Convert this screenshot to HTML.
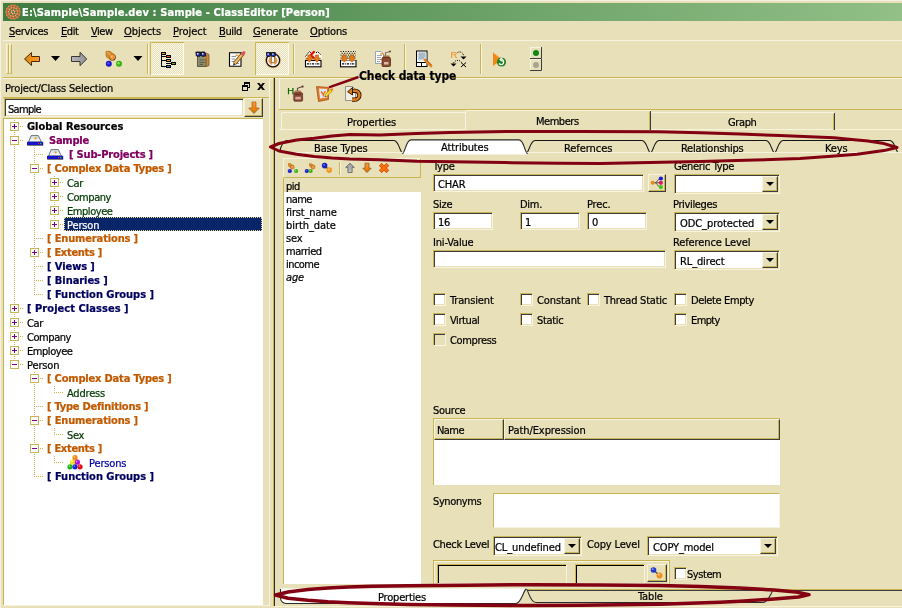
<!DOCTYPE html>
<html><head><meta charset="utf-8"><title>ClassEditor</title>
<style>
:root{--bg:#e8e0b8;--hi:#f7f3de;--sh:#c9b653;--dk:#3c3c40;}
*{box-sizing:border-box;margin:0;padding:0}
html,body{width:902px;height:608px;overflow:hidden;background:var(--bg)}
body{position:relative;font-family:"DejaVu Sans Condensed","Liberation Sans",sans-serif;font-size:11px;color:#000;line-height:13px}
.a{position:absolute}
.t{position:absolute;white-space:pre;line-height:13px;height:13px;-webkit-text-stroke:0.22px currentColor}
.b{font-weight:bold}
.sunk{position:absolute;border:1px solid;border-color:var(--sh) var(--hi) var(--hi) var(--sh);box-shadow:inset 1px 1px 0 var(--dk),inset -1px -1px 0 var(--bg);background:#fff}
.rais{position:absolute;border:1px solid;border-color:var(--hi) var(--dk) var(--dk) var(--hi);box-shadow:inset -1px -1px 0 var(--sh);background:var(--bg)}
.hl{position:absolute;height:1px}
.vl{position:absolute;width:1px}
.vd{position:absolute;width:1px;background:repeating-linear-gradient(180deg,var(--sh) 0 1px,transparent 1px 2px)}
.hd{position:absolute;height:1px;background:repeating-linear-gradient(90deg,var(--sh) 0 1px,transparent 1px 2px)}
.bx{position:absolute;width:9px;height:9px;border:1px solid var(--sh);background:#fff}
.bx b{position:absolute;left:1px;top:3px;width:5px;height:1px;background:#800080}
.bx i{position:absolute;left:3px;top:1px;width:1px;height:5px;background:#800080}
.dd{position:absolute;right:1px;top:1px;width:16px;height:16px;border:1px solid;border-color:var(--hi) var(--dk) var(--dk) var(--hi);box-shadow:inset -1px -1px 0 var(--sh);background:var(--bg)}
.dd:after{content:"";position:absolute;left:4px;top:5px;border:4px solid transparent;border-top:4px solid #000;border-bottom:none;width:0;height:0;margin-left:-1px}
#wrap{position:absolute;left:0;top:0;width:902px;height:608px;will-change:transform}
</style></head><body><div id="wrap">
<!-- window frame -->
<div class="hl" style="left:0;top:0;width:902px;background:#f4f1e4"></div>
<div class="vl" style="left:0;top:0;height:608px;background:#f4f1e4"></div>
<!-- title bar -->
<div class="a" id="title" style="left:3px;top:3px;width:899px;height:18px;background:linear-gradient(90deg,#3e7d42 0%,#92c087 100%)"></div>
<svg class="a" style="left:5px;top:4px" width="16" height="16" viewBox="0 0 16 16"><circle cx="8" cy="8" r="7.500" fill="#d4703a"/><circle cx="8.00" cy="8.00" r="1.00" fill="#3f7f43"/><circle cx="10.95" cy="8.52" r="0.95" fill="#3f7f43"/><circle cx="9.03" cy="10.82" r="0.95" fill="#3f7f43"/><circle cx="6.07" cy="10.30" r="0.95" fill="#3f7f43"/><circle cx="5.05" cy="7.48" r="0.95" fill="#3f7f43"/><circle cx="6.97" cy="5.18" r="0.95" fill="#3f7f43"/><circle cx="9.93" cy="5.70" r="0.95" fill="#3f7f43"/><circle cx="13.58" cy="8.49" r="0.70" fill="#3f7f43"/><circle cx="12.43" cy="11.43" r="0.70" fill="#3f7f43"/><circle cx="9.87" cy="13.28" r="0.70" fill="#3f7f43"/><circle cx="6.72" cy="13.45" r="0.70" fill="#3f7f43"/><circle cx="3.98" cy="11.90" r="0.70" fill="#3f7f43"/><circle cx="2.51" cy="9.10" r="0.70" fill="#3f7f43"/><circle cx="2.78" cy="5.96" r="0.70" fill="#3f7f43"/><circle cx="4.72" cy="3.46" r="0.70" fill="#3f7f43"/><circle cx="7.69" cy="2.41" r="0.70" fill="#3f7f43"/><circle cx="10.76" cy="3.13" r="0.70" fill="#3f7f43"/><circle cx="12.96" cy="5.39" r="0.70" fill="#3f7f43"/><circle cx="9.30" cy="9.09" r="0.55" fill="#f6d2b4"/><circle cx="7.70" cy="9.67" r="0.55" fill="#f6d2b4"/><circle cx="6.40" cy="8.58" r="0.55" fill="#f6d2b4"/><circle cx="6.70" cy="6.91" r="0.55" fill="#f6d2b4"/><circle cx="8.30" cy="6.33" r="0.55" fill="#f6d2b4"/><circle cx="9.60" cy="7.42" r="0.55" fill="#f6d2b4"/><circle cx="12.11" cy="9.58" r="0.55" fill="#f2c4a0"/><circle cx="10.60" cy="11.55" r="0.55" fill="#f2c4a0"/><circle cx="8.27" cy="12.39" r="0.55" fill="#f2c4a0"/><circle cx="5.85" cy="11.84" r="0.55" fill="#f2c4a0"/><circle cx="4.12" cy="10.07" r="0.55" fill="#f2c4a0"/><circle cx="3.61" cy="7.64" r="0.55" fill="#f2c4a0"/><circle cx="4.50" cy="5.33" r="0.55" fill="#f2c4a0"/><circle cx="6.50" cy="3.86" r="0.55" fill="#f2c4a0"/><circle cx="8.98" cy="3.71" r="0.55" fill="#f2c4a0"/><circle cx="11.14" cy="4.92" r="0.55" fill="#f2c4a0"/><circle cx="12.31" cy="7.11" r="0.55" fill="#f2c4a0"/><circle cx="15.20" cy="8.00" r="0.6" fill="#e89868"/><circle cx="14.49" cy="11.12" r="0.6" fill="#e89868"/><circle cx="12.49" cy="13.63" r="0.6" fill="#e89868"/><circle cx="9.60" cy="15.02" r="0.6" fill="#e89868"/><circle cx="6.40" cy="15.02" r="0.6" fill="#e89868"/><circle cx="3.51" cy="13.63" r="0.6" fill="#e89868"/><circle cx="1.51" cy="11.12" r="0.6" fill="#e89868"/><circle cx="0.80" cy="8.00" r="0.6" fill="#e89868"/><circle cx="1.51" cy="4.88" r="0.6" fill="#e89868"/><circle cx="3.51" cy="2.37" r="0.6" fill="#e89868"/><circle cx="6.40" cy="0.98" r="0.6" fill="#e89868"/><circle cx="9.60" cy="0.98" r="0.6" fill="#e89868"/><circle cx="12.49" cy="2.37" r="0.6" fill="#e89868"/><circle cx="14.49" cy="4.88" r="0.6" fill="#e89868"/></svg>
<div class="t b" style="left:22px;top:6px;color:#fff;letter-spacing:0.12px">E:\Sample\Sample.dev : Sample - ClassEditor [Person]</div>
<!-- menu -->
<div class="t" id="m1" style="letter-spacing:-0.34px;;;left:9px;top:25px"><u>S</u>ervices</div>
<div class="t" id="m2" style="letter-spacing:-0.42px;;;left:61px;top:25px"><u>E</u>dit</div>
<div class="t" id="m3" style="letter-spacing:-0.49px;;;left:91px;top:25px"><u>V</u>iew</div>
<div class="t" id="m4" style="letter-spacing:-0.06px;;;left:124px;top:25px"><u>O</u>bjects</div>
<div class="t" id="m5" style="letter-spacing:-0.05px;;;left:173px;top:25px"><u>P</u>roject</div>
<div class="t" id="m6" style="letter-spacing:-0.37px;;;left:219px;top:25px"><u>B</u>uild</div>
<div class="t" id="m7" style="letter-spacing:-0.15px;;;left:253px;top:25px"><u>G</u>enerate</div>
<div class="t" id="m8" style="letter-spacing:-0.17px;;;left:310px;top:25px"><u>O</u>ptions</div>
<div class="hl" style="left:3px;top:40px;width:899px;background:var(--hi)"></div>
<!--TOOLBAR-->
<!-- toolbar -->
<div class="hl" style="left:3px;top:77px;width:899px;background:var(--sh)"></div>
<div class="hl" style="left:3px;top:78px;width:899px;background:var(--hi)"></div>
<div class="a" style="left:6px;top:44px;width:3px;height:30px;border-left:1px solid var(--hi);border-top:1px solid var(--hi);border-right:1px solid var(--sh);border-bottom:1px solid var(--sh)"></div>
<div class="a" style="left:9px;top:44px;width:3px;height:30px;border-left:1px solid var(--hi);border-top:1px solid var(--hi);border-right:1px solid var(--sh);border-bottom:1px solid var(--sh)"></div>
<svg class="a" style="left:0;top:41px" width="902" height="36" viewBox="0 41 902 36">
<defs>
<linearGradient id="gO" x1="0" x2="1" y1="0" y2="0"><stop offset="0" stop-color="#c88a10"/><stop offset="0.5" stop-color="#f89018"/><stop offset="1" stop-color="#ff9a38"/></linearGradient>
<linearGradient id="gG" x1="0" x2="1" y1="0" y2="0"><stop offset="0" stop-color="#b8b8b8"/><stop offset="1" stop-color="#909090"/></linearGradient>
<pattern id="dith" width="2" height="2" patternUnits="userSpaceOnUse"><rect width="2" height="2" fill="#e8e0b8"/><rect width="1" height="1" fill="#f8f5e6"/><rect x="1" y="1" width="1" height="1" fill="#f8f5e6"/></pattern>
</defs>
<!-- back arrow -->
<path d="M24.5 59 L31.5 52.5 L31.5 56.5 L39.5 56.5 L39.5 61.5 L31.5 61.5 L31.5 65.5 Z" fill="url(#gO)" stroke="#4a2a08" stroke-width="1" stroke-linejoin="miter"/>
<path d="M51 56 L60 56 L55.5 61 Z" fill="#000"/>
<!-- forward arrow -->
<path d="M86.800 59 L80 52.300 L80 56.500 L71.500 56.500 L71.500 61.500 L80 61.500 L80 65.700 Z" fill="url(#gG)" stroke="#383838" stroke-width="1"/>
<!-- balls icon -->
<path d="M106 51.300 L110 51.300 L115.200 55.300 L110.800 60.200 L106 56.500 Z" fill="#d48a30" stroke="#a86a18" stroke-width="0.600"/>
<path d="M107 52.300 L112 56" stroke="#e8a850" stroke-width="1.200"/>
<circle cx="112.700" cy="57.400" r="3.100" fill="#5a3008"/>
<circle cx="112.400" cy="57.100" r="2.800" fill="#f09030"/><circle cx="111.800" cy="56.500" r="0.900" fill="#fbd0a0"/>
<circle cx="108.800" cy="63.800" r="3" fill="#1818c8"/><circle cx="108.300" cy="63.300" r="1.200" fill="#5050f0"/>
<circle cx="119" cy="63.800" r="3" fill="#38b010"/><circle cx="118.500" cy="63.300" r="1.200" fill="#80e860"/>
<path d="M133.5 56 L142.5 56 L138 61 Z" fill="#000"/>
<!-- separators -->
<rect x="147" y="44" width="1" height="30" fill="#c9b653"/><rect x="148" y="44" width="1" height="30" fill="#f7f3de"/>
<rect x="293" y="44" width="1" height="30" fill="#c9b653"/><rect x="294" y="44" width="1" height="30" fill="#f7f3de"/>
<rect x="404" y="44" width="1" height="30" fill="#c9b653"/><rect x="405" y="44" width="1" height="30" fill="#f7f3de"/>
<rect x="480" y="44" width="1" height="30" fill="#c9b653"/><rect x="481" y="44" width="1" height="30" fill="#f7f3de"/>
<!-- toggled buttons -->
<rect x="150" y="42" width="34" height="33" fill="url(#dith)"/>
<path d="M150.5 75 V42.5 H184" fill="none" stroke="#c9b653"/><path d="M151 74.500 H183.500 V43" fill="none" stroke="#fffbe6"/>
<rect x="255" y="42" width="34" height="33" fill="url(#dith)"/>
<path d="M255.5 75 V42.5 H289" fill="none" stroke="#c9b653"/><path d="M256 74.500 H288.500 V43" fill="none" stroke="#fffbe6"/>
<!-- tree icon -->
<g shape-rendering="crispEdges">
<rect x="161" y="52" width="5" height="3" fill="#000"/><rect x="162" y="53" width="3" height="1" fill="#f8960c"/>
<rect x="166" y="55" width="5" height="3" fill="#000"/><rect x="167" y="56" width="3" height="1" fill="#f8481c"/>
<rect x="166" y="59" width="5" height="3" fill="#000"/><rect x="167" y="60" width="3" height="1" fill="#d09c18"/>
<rect x="171" y="62" width="5" height="3" fill="#000"/><rect x="172" y="63" width="3" height="1" fill="#7ca80c"/>
<rect x="166" y="65" width="5" height="3" fill="#000"/><rect x="167" y="66" width="3" height="1" fill="#4878f8"/>
<rect x="161" y="55" width="1" height="12" fill="#000"/><rect x="161" y="56" width="5" height="1" fill="#000"/><rect x="161" y="60" width="5" height="1" fill="#000"/><rect x="161" y="66" width="5" height="1" fill="#000"/>
<rect x="166" y="63" width="5" height="1" fill="#000"/>
</g>
<!-- book with glasses -->
<path d="M198 54 L206 53 L209 54.500 V65.500 L206.500 66.500 H198 Z" fill="#d08838" stroke="#70481c" stroke-width="0.700"/>
<rect x="197.500" y="55.500" width="8.500" height="10.800" fill="#8e8e72" stroke="#50503c" stroke-width="0.800"/>
<path d="M199.500 60 H204.500 M199.500 62.500 H204.500 M199.500 64.500 H203" stroke="#5c5c48" stroke-width="1"/>
<rect x="204" y="57" width="2" height="1.200" fill="#f09020"/>
<path d="M195.500 52.500 H205" stroke="#101010" stroke-width="1.600"/>
<rect x="196.200" y="52.300" width="4.200" height="4" rx="1.200" fill="#1c2cb0" stroke="#101010" stroke-width="0.900"/>
<rect x="201.200" y="52.300" width="4.200" height="4" rx="1.200" fill="#1c2cb0" stroke="#101010" stroke-width="0.900"/>
<rect x="197" y="53.200" width="1.500" height="1.300" fill="#fff"/><rect x="202" y="53.200" width="1.500" height="1.300" fill="#fff"/>
<!-- note with pencil -->
<path d="M229.500 52.800 H241 V66.300 H229.500 Z" fill="#fff" stroke="#000" stroke-width="1.100"/>
<path d="M231.500 56.500 H236 M231.500 59 H235 M231.500 61.500 H234 M236 63.500 H239" stroke="#909090" stroke-width="1"/>
<rect x="235.500" y="54.600" width="3" height="1.200" fill="#f09020"/>
<path d="M234.500 63.500 L243.300 53.300" stroke="#6a4410" stroke-width="3.800"/>
<path d="M234.500 63.500 L243.300 53.300" stroke="#f0b860" stroke-width="2.400"/>
<path d="M242.600 54.200 L244 52.600" stroke="#e05068" stroke-width="3" stroke-linecap="round"/>
<path d="M232.800 65.800 L233.700 62.700 L235.800 64.500 Z" fill="#383838"/>
<!-- clock with glasses -->
<circle cx="273" cy="60.300" r="8" fill="#f2b070"/>
<circle cx="273" cy="60.300" r="6.600" fill="#fff" stroke="#101010" stroke-width="1.300"/>
<circle cx="273" cy="60.600" r="4.500" fill="#ea9848"/>
<rect x="271.700" y="55" width="2.600" height="7.300" fill="#fff" stroke="#303030" stroke-width="0.400"/><rect x="271.900" y="63.500" width="2.200" height="2.200" fill="#fff"/>
<path d="M266 53 H275.500" stroke="#101010" stroke-width="1.600"/>
<rect x="266.600" y="52.600" width="4" height="4" rx="1.200" fill="#1c2cb0" stroke="#101010" stroke-width="0.900"/>
<rect x="271.400" y="52.600" width="4" height="4" rx="1.200" fill="#1c2cb0" stroke="#101010" stroke-width="0.900"/>
<rect x="267.400" y="53.400" width="1.400" height="1.300" fill="#fff"/><rect x="272.200" y="53.400" width="1.400" height="1.300" fill="#fff"/>
<!-- icon 5 -->
<g>
<path d="M305.500 57 L309.500 51.500 L313 55 L309.500 59 H305.500 Z" fill="#fff"/>
<path d="M314 59 L313.500 55 L317.500 51.500 L321.500 55.500 V59 Z" fill="#fff"/>
<path d="M305.500 56.500 L309.500 51.500 L311 53 M316 53 L317.500 51.500 L321 55" fill="none" stroke="#000" stroke-width="1" stroke-dasharray="1.500 1"/>
<path d="M314.500 51.300 L310.800 55 L314.500 58.700" fill="none" stroke="#ee0808" stroke-width="2.200"/>
<rect x="305.500" y="60.500" width="15.500" height="6.300" fill="#fff" stroke="#000" stroke-width="1.100"/>
<path d="M307 63.800 H320" stroke="#000" stroke-width="1.200" stroke-dasharray="2.200 0.900 0.800 0.900"/>
<path d="M307.800 55 H311 V58 H313.200 L309.400 62.200 L305.600 58 H307.800 Z" fill="#e67c14" stroke="#9c4c08" stroke-width="0.500"/>
<path d="M315.300 55 H318.500 V58 H320.700 L316.900 62.200 L313.100 58 H315.300 Z" fill="#e67c14" stroke="#9c4c08" stroke-width="0.500"/>
</g>
<!-- icon 6 -->
<g>
<path d="M340.500 51.500 H356 M341.700 53.300 H356 M340.500 55.100 H356 M341.700 56.900 H356" stroke="#000" stroke-width="1" stroke-dasharray="1 1.500"/>
<rect x="340.500" y="60.500" width="15.500" height="6.300" fill="#fff" stroke="#000" stroke-width="1.100"/>
<rect x="341" y="58" width="14.500" height="2.500" fill="#fff"/>
<path d="M342 63.800 H355" stroke="#000" stroke-width="1.200" stroke-dasharray="2.200 0.900 0.800 0.900"/>
<path d="M342.700 55 H345.900 V58 H348.100 L344.300 62.200 L340.500 58 H342.700 Z" fill="#e67c14" stroke="#9c4c08" stroke-width="0.500"/>
<path d="M350.300 55 H353.500 V58 H355.700 L351.900 62.200 L348.100 58 H350.300 Z" fill="#e67c14" stroke="#9c4c08" stroke-width="0.500"/>
</g>
<!-- icon 7 doc + mill -->
<g>
<path d="M375.500 51.500 H381 L383.500 54 V63.500 H375.500 Z" fill="#fff" stroke="#9098a8" stroke-width="0.900"/>
<path d="M377 55.500 H382 M377 57.500 H381 M377 59.500 H382 M377 61.500 H380" stroke="#909090" stroke-width="0.800"/>
<rect x="380" y="53.300" width="3.500" height="1.200" fill="#f08818"/>
<path d="M385.500 56 V52.800 L390 51.500" fill="none" stroke="#707070" stroke-width="1.100"/><circle cx="390" cy="51.500" r="1" fill="#804030"/>
<rect x="383" y="55.500" width="6.500" height="2.500" fill="#a86848"/>
<rect x="382" y="57.500" width="8.500" height="9" rx="1" fill="#8a4a30" stroke="#5a2a18" stroke-width="0.800"/>
<rect x="384" y="62" width="4.500" height="2.500" fill="#e0b8a8"/>
</g>
<!-- icon 8 doc + magnifier -->
<g>
<rect x="416.500" y="51" width="10.500" height="15.500" fill="#fff" stroke="#000" stroke-width="1"/>
<rect x="417.500" y="52" width="9" height="8.500" rx="2" fill="#c8d4dc"/>
<path d="M419 54 H425 M419 56 H425 M419 58 H424" stroke="#8898a8" stroke-width="0.900"/>
<path d="M417 62.500 H427 M421.500 62.500 V66" stroke="#000" stroke-width="1"/>
<path d="M425 60 L431 66" stroke="#e88820" stroke-width="2.600" stroke-linecap="round"/><path d="M425.800 59.300 L431.800 65.300" stroke="#803808" stroke-width="0.700"/>
</g>
<!-- icon 9 R -->
<g>
<text x="450.500" y="58" font-family="Liberation Sans,sans-serif" font-size="9.500" fill="#f08818">R</text>
<path d="M457.500 52.500 C460 51 463.500 52.500 463.500 56" fill="none" stroke="#000" stroke-width="1" stroke-dasharray="1 1.200"/>
<path d="M460.500 56.500 H466.500 L463.500 59.500 Z" fill="#000"/>
<path d="M453.500 63 C455 60 459 59.500 461.500 62" fill="none" stroke="#000" stroke-width="1" stroke-dasharray="1 1.200"/>
<path d="M450.500 63.500 H456.500 L453.500 66.500 Z" fill="#000"/>
<path d="M461 62.500 L466 67 M466 62.500 L461 67" stroke="#000" stroke-width="1"/>
</g>
<!-- icon 10 play -->
<g>
<path d="M493 52.500 L502 59.500 L493 66 Z" fill="#f08818"/><path d="M493 52.500 L502 59.500" stroke="#f8b060" stroke-width="0.800"/>
<circle cx="501.500" cy="62" r="4.600" fill="#208020"/>
<path d="M499 63.500 A2.600 2.600 0 1 0 501.500 59.400" fill="none" stroke="#fff" stroke-width="1.300"/><path d="M502.500 57.500 L500 59.500 L502.500 61.500" fill="none" stroke="#fff" stroke-width="1.100"/>
</g>
<!-- icon 11 lights -->
<g>
<rect x="530.500" y="47.500" width="11" height="11" fill="#e8e0b8" stroke="#f7f3de" stroke-width="1"/><path d="M530 58.500 H541.500 V47" fill="none" stroke="#3c3c40" stroke-width="1"/>
<circle cx="536" cy="53" r="3" fill="#108810"/>
<rect x="530.500" y="59.500" width="11" height="11" fill="#e8e0b8" stroke="#f7f3de" stroke-width="1"/><path d="M530 70.500 H541.500 V59" fill="none" stroke="#3c3c40" stroke-width="1"/>
<circle cx="536" cy="65" r="3" fill="#a8a490"/>
</g>
</svg>
<!--/TOOLBAR-->
<!--DOCK-->
<!-- dock -->
<div class="t" style="letter-spacing:-0.17px;;;left:5px;top:82px">Project/Class Selection</div>
<svg class="a" style="left:241px;top:81px" width="26" height="11" viewBox="241 81 26 11" shape-rendering="crispEdges"><rect x="244.500" y="82.500" width="5" height="5" fill="none" stroke="#000"/><rect x="244" y="82" width="6" height="2" fill="#000"/><rect x="242.500" y="85.500" width="5" height="5" fill="#e8e0b8" stroke="#000"/><rect x="242" y="85" width="6" height="2" fill="#000"/><path shape-rendering="auto" d="M257 83 H259.400 L265 90 H262.600 Z" fill="#000"/><path shape-rendering="auto" d="M265 83 H262.600 L257 90 H259.400 Z" fill="#000"/></svg>
<div class="hl" style="left:3px;top:97px;width:266px;background:var(--sh)"></div>
<div class="vl" style="left:269px;top:79px;height:527px;background:var(--hi)"></div>
<div class="vl" style="left:273px;top:78px;height:528px;background:var(--sh)"></div>
<div class="vl" style="left:274px;top:78px;height:528px;background:#2a2a2a"></div>
<div class="sunk" style="left:4px;top:98px;width:240px;height:19px"></div>
<div class="t" style="letter-spacing:-0.69px;;;left:8px;top:103px">Sample</div>
<div class="rais" style="left:244px;top:98px;width:19px;height:19px"></div>
<svg class="a" style="left:248px;top:101px" width="12" height="14" viewBox="248 101 12 14"><defs><linearGradient id="gD" x1="0" x2="0" y1="0" y2="1"><stop offset="0" stop-color="#ff9840"/><stop offset="0.600" stop-color="#f08010"/><stop offset="1" stop-color="#b87808"/></linearGradient></defs><path d="M252 102 H256 V108 H259.300 L254 113.600 L248.700 108 H252 Z" fill="url(#gD)" stroke="#905010" stroke-width="0.600"/></svg>
<div class="hl" style="left:3px;top:118px;width:260px;background:var(--sh)"></div>
<div class="a" style="left:3px;top:119px;width:260px;height:486px;background:#fff;border-left:1px solid var(--sh)"></div>
<div class="hl" style="left:3px;top:605px;width:266px;background:var(--hi)"></div>
<!-- tree -->
<svg width="0" height="0" style="position:absolute"><defs>
<g id="drive"><path d="M4.200 0.400 H11.200 L14.400 6.900 H1.600 Z" fill="url(#gDr)" stroke="#56686c" stroke-width="0.900"/><circle cx="8.600" cy="3.300" r="1.100" fill="#f09020"/><rect x="0" y="6.800" width="16.200" height="3.400" fill="#1414c8"/><rect x="0.300" y="10.200" width="15.900" height="1.300" fill="url(#gSh)"/><rect x="11" y="7.900" width="1.300" height="1.300" fill="#f01818"/><rect x="13.100" y="7.900" width="1.300" height="1.300" fill="#28e028"/></g>
<linearGradient id="gDr" x1="0" x2="0" y1="0" y2="1"><stop offset="0" stop-color="#c4d6d8"/><stop offset="1" stop-color="#ffffff"/></linearGradient><linearGradient id="gSh" x1="0" x2="0" y1="0" y2="1"><stop offset="0" stop-color="#4a4a38"/><stop offset="1" stop-color="#4a4a38" stop-opacity="0"/></linearGradient>
<g id="balls3"><circle cx="8" cy="2.700" r="2.600" fill="#f08a10"/><circle cx="7.300" cy="2" r="0.900" fill="#f8c070"/><circle cx="5.600" cy="7.200" r="2.600" fill="#e8e010"/><circle cx="4.900" cy="6.500" r="0.900" fill="#ffffa0"/><circle cx="10.400" cy="7.200" r="2.600" fill="#b010d8"/><circle cx="9.700" cy="6.500" r="0.900" fill="#e080f8"/><circle cx="3" cy="11.800" r="2.600" fill="#18b018"/><circle cx="2.300" cy="11.100" r="0.900" fill="#80f080"/><circle cx="8" cy="11.800" r="2.600" fill="#1020d8"/><circle cx="7.300" cy="11.100" r="0.900" fill="#7080f8"/><circle cx="13" cy="11.800" r="2.600" fill="#e01010"/><circle cx="12.300" cy="11.100" r="0.900" fill="#f88080"/></g>
</defs></svg>
<div class="vd" style="left:14px;top:120px;height:245px"></div>
<div class="vd" style="left:34px;top:148px;height:147px"></div>
<div class="vd" style="left:54px;top:176px;height:49px"></div>
<div class="vd" style="left:34px;top:372px;height:105px"></div>
<div class="vd" style="left:54px;top:386px;height:7px"></div>
<div class="vd" style="left:54px;top:428px;height:7px"></div>
<div class="vd" style="left:54px;top:456px;height:7px"></div>
<div class="hd" style="left:16px;top:126px;width:8px"></div>
<div class="bx" style="left:10px;top:122px"><b></b><i></i></div>
<div class="t b" style="left:27px;top:120px;color:#000">Global Resources</div>
<div class="hd" style="left:16px;top:140px;width:8px"></div>
<div class="bx" style="left:10px;top:136px"><b></b></div>
<svg class="a" style="left:27px;top:135px" width="17" height="12" viewBox="0 0 17 12"><use href="#drive"/></svg>
<div class="t b" style="letter-spacing:-0.22px;;left:49px;top:134px;color:#800060">Sample</div>
<div class="hd" style="left:36px;top:154px;width:8px"></div>
<svg class="a" style="left:47px;top:149px" width="17" height="12" viewBox="0 0 17 12"><use href="#drive"/></svg>
<div class="t b" style="letter-spacing:-0.18px;;left:69px;top:148px;color:#800060">[ Sub-Projects ]</div>
<div class="hd" style="left:36px;top:168px;width:8px"></div>
<div class="bx" style="left:30px;top:164px"><b></b></div>
<div class="t b" style="letter-spacing:-0.18px;;left:47px;top:162px;color:#c25a00">[ Complex Data Types ]</div>
<div class="hd" style="left:56px;top:182px;width:8px"></div>
<div class="bx" style="left:50px;top:178px"><b></b><i></i></div>
<div class="t" style="letter-spacing:-0.35px;;left:67px;top:177px;color:#003800">Car</div>
<div class="hd" style="left:56px;top:196px;width:8px"></div>
<div class="bx" style="left:50px;top:192px"><b></b><i></i></div>
<div class="t" style="letter-spacing:-0.44px;;left:67px;top:191px;color:#003800">Company</div>
<div class="hd" style="left:56px;top:210px;width:8px"></div>
<div class="bx" style="left:50px;top:206px"><b></b><i></i></div>
<div class="t" style="letter-spacing:-0.45px;;left:67px;top:205px;color:#003800">Employee</div>
<div class="hd" style="left:56px;top:224px;width:8px"></div>
<div class="bx" style="left:50px;top:220px"><b></b><i></i></div>
<div class="a" style="left:64px;top:217px;width:198px;height:14px;background:#0a246a;outline:1px dotted #e8d890;outline-offset:-1px"></div>
<div class="t" style="letter-spacing:-0.14px;;left:67px;top:219px;color:#fff">Person</div>
<div class="hd" style="left:36px;top:238px;width:8px"></div>
<div class="t b" style="letter-spacing:-0.14px;;left:47px;top:232px;color:#c25a00">[ Enumerations ]</div>
<div class="hd" style="left:36px;top:252px;width:8px"></div>
<div class="bx" style="left:30px;top:248px"><b></b><i></i></div>
<div class="t b" style="letter-spacing:-0.29px;;left:47px;top:246px;color:#c25a00">[ Extents ]</div>
<div class="hd" style="left:36px;top:266px;width:8px"></div>
<div class="t b" style="letter-spacing:-0.08px;;left:47px;top:260px;color:#000060">[ Views ]</div>
<div class="hd" style="left:36px;top:280px;width:8px"></div>
<div class="t b" style="letter-spacing:-0.06px;;left:47px;top:274px;color:#000060">[ Binaries ]</div>
<div class="hd" style="left:36px;top:294px;width:8px"></div>
<div class="t b" style="letter-spacing:-0.02px;;left:47px;top:288px;color:#000060">[ Function Groups ]</div>
<div class="hd" style="left:16px;top:308px;width:8px"></div>
<div class="bx" style="left:10px;top:304px"><b></b><i></i></div>
<div class="t b" style="letter-spacing:0.05px;;left:27px;top:302px;color:#000060">[ Project Classes ]</div>
<div class="hd" style="left:16px;top:322px;width:8px"></div>
<div class="bx" style="left:10px;top:318px"><b></b><i></i></div>
<div class="t" style="letter-spacing:-0.35px;;left:27px;top:317px;color:#000">Car</div>
<div class="hd" style="left:16px;top:336px;width:8px"></div>
<div class="bx" style="left:10px;top:332px"><b></b><i></i></div>
<div class="t" style="letter-spacing:-0.44px;;left:27px;top:331px;color:#000">Company</div>
<div class="hd" style="left:16px;top:350px;width:8px"></div>
<div class="bx" style="left:10px;top:346px"><b></b><i></i></div>
<div class="t" style="letter-spacing:-0.45px;;left:27px;top:345px;color:#000">Employee</div>
<div class="hd" style="left:16px;top:364px;width:8px"></div>
<div class="bx" style="left:10px;top:360px"><b></b></div>
<div class="t" style="letter-spacing:-0.14px;;left:27px;top:359px;color:#000">Person</div>
<div class="hd" style="left:36px;top:378px;width:8px"></div>
<div class="bx" style="left:30px;top:374px"><b></b></div>
<div class="t b" style="letter-spacing:-0.18px;;left:47px;top:372px;color:#c25a00">[ Complex Data Types ]</div>
<div class="hd" style="left:56px;top:392px;width:8px"></div>
<div class="t" style="letter-spacing:-0.2px;;left:67px;top:387px;color:#003800">Address</div>
<div class="hd" style="left:36px;top:406px;width:8px"></div>
<div class="t b" style="letter-spacing:-0.23px;;left:47px;top:400px;color:#c25a00">[ Type Definitions ]</div>
<div class="hd" style="left:36px;top:420px;width:8px"></div>
<div class="bx" style="left:30px;top:416px"><b></b></div>
<div class="t b" style="letter-spacing:-0.14px;;left:47px;top:414px;color:#c25a00">[ Enumerations ]</div>
<div class="hd" style="left:56px;top:434px;width:8px"></div>
<div class="t" style="letter-spacing:-0.28px;;left:67px;top:429px;color:#003800">Sex</div>
<div class="hd" style="left:36px;top:448px;width:8px"></div>
<div class="bx" style="left:30px;top:444px"><b></b></div>
<div class="t b" style="letter-spacing:-0.29px;;left:47px;top:442px;color:#c25a00">[ Extents ]</div>
<div class="hd" style="left:56px;top:462px;width:8px"></div>
<svg class="a" style="left:67px;top:455px" width="16" height="15" viewBox="0 0 16 15"><use href="#balls3"/></svg>
<div class="t" style="letter-spacing:-0.14px;;left:89px;top:457px;color:#0000a8">Persons</div>
<div class="hd" style="left:36px;top:476px;width:8px"></div>
<div class="t b" style="letter-spacing:-0.02px;;left:47px;top:470px;color:#000060">[ Function Groups ]</div>
<!--RIGHT-->
<!-- right panel -->
<div class="vl" style="left:279px;top:79px;height:31px;background:var(--hi)"></div>
<div class="hl" style="left:279px;top:109px;width:623px;background:var(--sh)"></div>
<!-- mini toolbar icons -->
<svg class="a" style="left:285px;top:84px" width="80" height="20" viewBox="285 84 80 20">
<text x="287.200" y="93.700" font-family="Liberation Sans,sans-serif" font-size="9.500" fill="#006000" stroke="#006000" stroke-width="0.250">H</text>
<path d="M297.500 91 V88.300 L302.500 86.500" fill="none" stroke="#5a4a48" stroke-width="1.200"/><circle cx="302.600" cy="86.600" r="1.100" fill="#6a3a30"/>
<path d="M295 90.500 H300.500 L302 93 H294 Z" fill="#b07858"/>
<rect x="293.800" y="92.800" width="8.800" height="8.400" rx="1" fill="#8a4a34" stroke="#5a2a18" stroke-width="0.700"/>
<rect x="295.300" y="96.800" width="5.500" height="2.600" fill="#d8a8a0"/><rect x="295.300" y="94" width="5.500" height="1.200" fill="#6a3020"/>
<path d="M316.500 86.500 L328.500 87.500 V99.500 L318.500 101.500 Z" fill="#e07828" stroke="#a85010" stroke-width="0.800"/>
<path d="M319 88.500 L327 89 V97.500 L320 98.500 Z" fill="#dfe6f4"/>
<path d="M321 91.500 L323.300 94.500 L325.500 91 M323.300 94.500 V96.500" fill="none" stroke="#f07010" stroke-width="1.400"/>
<path d="M325.500 96 L331.500 90" stroke="#a08000" stroke-width="3"/><path d="M325.500 96 L331.500 90" stroke="#f8d820" stroke-width="2"/><circle cx="331.800" cy="89.600" r="1.300" fill="#f08020"/><path d="M324.500 97 L325 95.500 L326.200 96.600 Z" fill="#202020"/>
<path d="M345.500 86.500 H352.500 L355.500 89.500 V100.500 H345.500 Z" fill="#f2efe2" stroke="#8a8a8a" stroke-width="0.900"/><path d="M352.500 86.500 V89.500 H355.500" fill="none" stroke="#8a8a8a" stroke-width="0.700"/>
<path d="M351.500 90.800 H355 A4.400 4.400 0 0 1 355 99.600 H352" fill="none" stroke="#201000" stroke-width="4.200"/>
<path d="M351.500 90.800 H355 A4.400 4.400 0 0 1 355 99.600 H352" fill="none" stroke="#e07c18" stroke-width="2.600"/>
<path d="M347.600 91.700 L352.500 87.500 V95 Z" fill="#e07c18" stroke="#201000" stroke-width="0.900"/>
</svg>
<!-- header row Properties / Members / Graph -->
<div class="hl" style="left:279px;top:129px;width:186px;background:var(--hi)"></div><div class="hl" style="left:651px;top:129px;width:251px;background:var(--hi)"></div>
<div class="a" style="left:281px;top:112px;width:184px;height:18px;border-top:1px solid var(--hi);border-left:1px solid var(--hi);border-top-left-radius:3px"></div>
<div class="a" style="left:465px;top:110px;width:186px;height:20px;border-top:1px solid var(--hi);border-left:1px solid var(--hi);border-top-left-radius:2px;background:var(--bg)"></div>
<div class="vl" style="left:649px;top:112px;height:18px;background:var(--sh)"></div><div class="vl" style="left:650px;top:111px;height:19px;background:var(--dk)"></div>
<div class="hl" style="left:651px;top:112px;width:183px;background:var(--hi)"></div>
<div class="vl" style="left:833px;top:114px;height:16px;background:var(--sh)"></div><div class="vl" style="left:834px;top:113px;height:17px;background:var(--dk)"></div>
<div class="t" style="letter-spacing:-0.1px;;;left:347px;top:116px">Properties</div>
<div class="t" style="letter-spacing:-0.47px;;;left:536px;top:115px">Members</div>
<div class="t" style="letter-spacing:-0.37px;;;left:728px;top:116px">Graph</div>
<!-- sub tabs -->
<div class="hl" style="left:279px;top:152px;width:623px;background:var(--hi)"></div>
<svg class="a" style="left:276px;top:136px" width="626" height="20" viewBox="276 136 626 20">
<g fill="none" stroke="#141414" stroke-width="1.100">
<path d="M279.500 152 C280.500 148 283 140.500 287 140.500 H394 C398 140.500 399 148 401.500 152"/>
<path d="M527.500 152 C530 148 531 140.500 535 140.500 H642 C646 140.500 647 148 649.500 152"/>
<path d="M651.500 152 C654 148 655 140.500 659 140.500 H766 C770 140.500 771 148 773.500 152"/>
<path d="M775.500 152 C778 148 779 140.500 783 140.500 H890 C894 140.500 895 148 897.500 152"/>
</g>
<path d="M403 153.500 C406 149 406.500 139.900 411 139.900 H519 C523.500 139.900 524 149 527 153.500 Z" fill="#fff" stroke="#2a2a2a" stroke-width="1.100"/>
<rect x="403.500" y="152.500" width="123" height="2" fill="#fff"/>
</svg>
<div class="t" style="letter-spacing:-0.14px;;;left:314px;top:142px">Base Types</div>
<div class="t" style="letter-spacing:-0.12px;;;left:441px;top:141px">Attributes</div>
<div class="t" style="letter-spacing:-0.07px;;;left:564px;top:142px">Refernces</div>
<div class="t" style="letter-spacing:-0.26px;;;left:681px;top:142px">Relationships</div>
<div class="t" style="letter-spacing:-0.11px;;;left:825px;top:142px">Keys</div>
<!-- attribute list toolbar -->
<div class="a" style="left:283px;top:158px;width:138px;height:20px;border-top:1px solid var(--hi);border-left:1px solid var(--hi);border-right:1px solid var(--sh);border-bottom:1px solid var(--sh)"></div>
<svg class="a" style="left:285px;top:161px" width="110" height="15" viewBox="285 161 110 15">
<defs><linearGradient id="gU" x1="0" x2="0" y1="0" y2="1"><stop offset="0" stop-color="#9a9a9a"/><stop offset="1" stop-color="#c4c4c4"/></linearGradient></defs>
<path d="M288 163 L290.300 163 L294 166 L291.500 169 L288 166 Z" fill="#d48a30"/><circle cx="292.300" cy="167" r="2" fill="#f09838" stroke="#9a5a10" stroke-width="0.500"/>
<circle cx="289.800" cy="171" r="2.100" fill="#1818c8"/><circle cx="289.400" cy="170.600" r="0.800" fill="#5858f0"/><circle cx="296.100" cy="171" r="2.100" fill="#38b010"/><circle cx="295.700" cy="170.600" r="0.800" fill="#80e860"/>
<path d="M309 163.200 L311.300 163.200 L315 166 L312.300 169 L309 166 Z" fill="#d48a30"/><circle cx="313.100" cy="167" r="2" fill="#f09838" stroke="#9a5a10" stroke-width="0.500"/>
<circle cx="306.800" cy="171" r="2.100" fill="#1818c8"/><circle cx="306.400" cy="170.600" r="0.800" fill="#5858f0"/><circle cx="310.600" cy="171" r="2.100" fill="#38b010"/><circle cx="310.200" cy="170.600" r="0.800" fill="#80e860"/>
<path d="M325 166 L329 170" stroke="#303030" stroke-width="1.200"/><circle cx="324.600" cy="165.600" r="2.800" fill="#1820c0"/><circle cx="324" cy="165" r="1" fill="#6068f0"/><circle cx="329.200" cy="170.100" r="2.800" fill="#f09818"/><circle cx="328.600" cy="169.500" r="1" fill="#f8c870"/>
<rect x="339" y="162" width="1" height="13" fill="#c9b653"/><rect x="340" y="162" width="1" height="13" fill="#f7f3de"/>
<path d="M350 163.200 L354.200 167.400 H352.100 V172.500 H347.900 V167.400 H345.800 Z" fill="url(#gU)" stroke="#5a5a5a" stroke-width="0.800"/>
<path d="M367 172.600 L371.200 168.200 H369 V163.200 H365 V168.200 H362.800 Z" fill="url(#gD)" stroke="#905010" stroke-width="0.700"/>
<path d="M380.300 164.300 L387.800 171.600 M387.800 164.300 L380.300 171.600" stroke="#a84800" stroke-width="3.800"/>
<path d="M380.300 164.300 L387.800 171.600 M387.800 164.300 L380.300 171.600" stroke="#ff6c08" stroke-width="2.800"/>
</svg>
<!-- attribute list -->
<div class="a" style="left:283px;top:178px;width:138px;height:406px;background:#fff;border-left:1px solid var(--sh)"></div>
<div class="a" style="left:284px;top:178px;width:137px;height:14px;background:var(--bg)"></div>
<div class="t" style="letter-spacing:-0.51px;;;left:286px;top:180px">pid</div>
<div class="t" style="letter-spacing:-0.57px;;;left:286px;top:193px">name</div>
<div class="t" style="letter-spacing:-0.16px;;;left:286px;top:206px">first_name</div>
<div class="t" style="letter-spacing:-0.07px;;;left:286px;top:219px">birth_date</div>
<div class="t" style="letter-spacing:-0.14px;;;left:286px;top:232px">sex</div>
<div class="t" style="letter-spacing:-0.45px;;;left:286px;top:245px">married</div>
<div class="t" style="letter-spacing:-0.54px;;;left:286px;top:258px">income</div>
<div class="t" style="letter-spacing:-0.15px;;;left:286px;top:271px;font-style:italic">age</div>
<!--FORM-->
<!-- form -->
<div class="t" style="letter-spacing:-0.27px;;;left:433px;top:160px">Type</div>
<div class="t" style="letter-spacing:-0.34px;;;left:674px;top:160px">Generic Type</div>
<div class="sunk" style="left:433px;top:174px;width:211px;height:18px"></div>
<div class="t" style="letter-spacing:-0.12px;;;left:438px;top:178px">CHAR</div>
<div class="rais" style="left:648px;top:174px;width:18px;height:18px"></div>
<svg class="a" style="left:650px;top:176px" width="14" height="14" viewBox="650 176 14 14"><path d="M653 182.800 H660 M655.500 182.800 C657 182.800 657.500 179 660 178.600 M655.500 182.800 C657 182.800 657.500 186.600 660 187" stroke="#484838" stroke-width="0.900" fill="none"/><circle cx="652.600" cy="182.800" r="2" fill="#e88a20"/><circle cx="660.900" cy="178.500" r="2.100" fill="#1818d8"/><circle cx="660.900" cy="182.800" r="2.100" fill="#e01860"/><circle cx="660.900" cy="187.100" r="2.100" fill="#38c818"/></svg>
<div class="sunk cb" style="left:674px;top:174px;width:106px;height:20px"><span class="dd"></span></div>
<div class="t" style="letter-spacing:-0.21px;;;left:433px;top:198px">Size</div>
<div class="t" style="letter-spacing:-0.29px;;;left:520px;top:198px">Dim.</div>
<div class="t" style="letter-spacing:-0.16px;;;left:587px;top:198px">Prec.</div>
<div class="t" style="letter-spacing:-0.36px;;;left:673px;top:198px">Privileges</div>
<div class="sunk" style="left:433px;top:212px;width:60px;height:18px"></div><div class="t" style="letter-spacing:-0.2px;;;left:438px;top:216px">16</div>
<div class="sunk" style="left:520px;top:212px;width:60px;height:18px"></div><div class="t" style="letter-spacing:-0.2px;;;left:525px;top:216px">1</div>
<div class="sunk" style="left:587px;top:212px;width:60px;height:18px"></div><div class="t" style="letter-spacing:-0.2px;;;left:592px;top:216px">0</div>
<div class="sunk cb" style="left:674px;top:212px;width:106px;height:20px"><span class="dd"></span></div><div class="t" style="letter-spacing:-0.07px;;;left:680px;top:217px">ODC_protected</div>
<div class="t" style="letter-spacing:-0.16px;;;left:433px;top:236px">Ini-Value</div>
<div class="t" style="letter-spacing:-0.11px;;;left:673px;top:236px">Reference Level</div>
<div class="sunk" style="left:433px;top:250px;width:233px;height:18px"></div>
<div class="sunk cb" style="left:674px;top:250px;width:106px;height:20px"><span class="dd"></span></div><div class="t" style="letter-spacing:-0.13px;;;left:680px;top:255px">RL_direct</div>
<!-- checkboxes -->
<div class="sunk" style="left:433px;top:293px;width:13px;height:13px"></div><div class="t" style="letter-spacing:-0.15px;;;left:450px;top:294px">Transient</div>
<div class="sunk" style="left:520px;top:293px;width:13px;height:13px"></div><div class="t" style="letter-spacing:-0.11px;;;left:537px;top:294px">Constant</div>
<div class="sunk" style="left:587px;top:293px;width:13px;height:13px"></div><div class="t" style="letter-spacing:-0.23px;;;left:604px;top:294px">Thread Static</div>
<div class="sunk" style="left:674px;top:293px;width:13px;height:13px"></div><div class="t" style="letter-spacing:-0.38px;;;left:691px;top:294px">Delete Empty</div>
<div class="sunk" style="left:433px;top:313px;width:13px;height:13px"></div><div class="t" style="letter-spacing:-0.42px;;;left:450px;top:314px">Virtual</div>
<div class="sunk" style="left:520px;top:313px;width:13px;height:13px"></div><div class="t" style="letter-spacing:-0.32px;;;left:537px;top:314px">Static</div>
<div class="sunk" style="left:674px;top:313px;width:13px;height:13px"></div><div class="t" style="letter-spacing:-0.62px;;;left:691px;top:314px">Empty</div>
<div class="sunk" style="left:433px;top:333px;width:13px;height:13px;background:var(--bg)"></div><div class="t" style="letter-spacing:-0.34px;;;left:450px;top:334px">Compress</div>
<!-- source table -->
<div class="t" style="letter-spacing:-0.26px;;;left:433px;top:404px">Source</div>
<div class="a" style="left:433px;top:418px;width:347px;height:67px;background:#fff;border-left:1px solid var(--sh);border-top:1px solid var(--sh)"></div>
<div class="a" style="left:434px;top:419px;width:70px;height:21px;background:var(--bg);border-top:1px solid var(--hi);border-left:1px solid var(--hi);border-right:1px solid var(--dk);border-bottom:1px solid var(--dk);box-shadow:inset -1px -1px 0 var(--sh)"></div>
<div class="a" style="left:504px;top:419px;width:276px;height:21px;background:var(--bg);border-top:1px solid var(--hi);border-left:1px solid var(--hi);border-right:1px solid var(--dk);border-bottom:1px solid var(--dk);box-shadow:inset -1px -1px 0 var(--sh)"></div>
<div class="t" style="letter-spacing:-0.55px;;;left:437px;top:424px">Name</div>
<div class="t" style="letter-spacing:-0.07px;;;left:508px;top:424px">Path/Expression</div>
<div class="t" style="letter-spacing:-0.39px;;;left:433px;top:495px">Synonyms</div>
<div class="a" style="left:493px;top:493px;width:287px;height:35px;background:#fff;border:1px solid var(--sh);border-right-color:var(--hi);border-bottom-color:var(--hi)"></div>
<div class="t" style="letter-spacing:-0.31px;;;left:433px;top:538px">Check Level</div>
<div class="sunk cb" style="left:493px;top:536px;width:89px;height:20px"><span class="dd"></span></div>
<div class="a" style="left:495px;top:541px;width:70px;height:13px;overflow:hidden"><div class="t" style="letter-spacing:-0.1px;;;left:0px;top:0">CL_undefined</div></div>
<div class="t" style="letter-spacing:-0.15px;;;left:587px;top:538px">Copy Level</div>
<div class="sunk cb" style="left:647px;top:536px;width:131px;height:20px"><span class="dd"></span></div><div class="t" style="letter-spacing:-0.14px;;;left:653px;top:541px">COPY_model</div>
<!-- bottom group -->
<div class="a" style="left:433px;top:560px;width:237px;height:26px;border:1px solid var(--sh);border-bottom:none;box-shadow:inset 1px 1px 0 var(--hi)"></div><div class="vl" style="left:668px;top:561px;height:24px;background:var(--hi)"></div>
<div class="sunk" style="left:437px;top:564px;width:130px;height:20px;background:var(--bg);box-shadow:inset 1px 1px 0 #000,inset -1px -1px 0 var(--bg)"></div>
<div class="sunk" style="left:575px;top:564px;width:70px;height:20px;background:var(--bg);box-shadow:inset 1px 1px 0 #000,inset -1px -1px 0 var(--bg)"></div>
<div class="rais" style="left:647px;top:564px;width:20px;height:18px"></div>
<svg class="a" style="left:649px;top:565px" width="16" height="15" viewBox="649 565 16 15"><path d="M654 570.500 L659 575" stroke="#404040" stroke-width="1.200"/><circle cx="653.500" cy="570" r="2.800" fill="#2038d0"/><circle cx="652.800" cy="569.200" r="0.900" fill="#90a0f0"/><circle cx="659.500" cy="575.500" r="3" fill="#f09018"/><circle cx="658.800" cy="574.600" r="1" fill="#f8d090"/></svg>
<div class="sunk" style="left:674px;top:567px;width:13px;height:13px"></div><div class="t" style="letter-spacing:-0.43px;;;left:687px;top:568px">System</div>
<!--BOTTOM-->
<!-- bottom tabs -->
<div class="hl" style="left:275px;top:606px;width:627px;background:var(--hi)"></div>
<svg class="a" style="left:276px;top:586px" width="626" height="22" viewBox="276 586 626 22">
<rect x="527" y="589" width="375" height="1" fill="#c9b653"/><rect x="527" y="590" width="375" height="1" fill="#3c3c40"/>
<path d="M280.500 588.500 V598 C280.500 601 283 603.500 286 603.500 H516 C521 603.500 523 592 526 588.500 Z" fill="#fff"/>
<path d="M280.500 589 V598 C280.500 601 283 603.500 286 603.500 H516 C521 603.500 523 592 526 589" fill="none" stroke="#2a2a2a" stroke-width="1.100"/>
<path d="M526.500 589 C529 592 530 602.500 536 602.500 H763 C768 602.500 770 595 773 590.500" fill="none" stroke="#2a2a2a" stroke-width="1.100"/>
</svg>
<div class="t" style="letter-spacing:-0.2px;;;left:378px;top:591px">Properties</div>
<div class="t" style="letter-spacing:-0.14px;;;left:638px;top:590px">Table</div>
<!--ANNOT-->
<!-- annotations -->
<svg class="a" style="left:0;top:0;pointer-events:none" width="902" height="608" viewBox="0 0 902 608">
<g fill="none" stroke="#820012" stroke-width="3" stroke-linejoin="round" stroke-linecap="round">
<path d="M270.500 147 L279 143.500 L296.600 140 L314.300 138.200 L332 136 L350 134.600 L380 135 L416 133.500 L450 132.600 L506 131.600 L580 131.400 L658 131.800 L700 132.700 L740 134 L780 135.500 L834 137.700 L857 140 L868 141 L884 143.600 L897 147.500 L884 150.600 L857 154.200 L828 156.600 L800 158.500 L755 160 L700 161.500 L662 162.200 L600 163.400 L560 163.200 L505 162.600 L470 162 L417 161.200 L380 159.800 L350 159 L332 157.900 L314.300 156.400 L296.600 154.200 L279 151 Z"/>
<path stroke-width="3.500" d="M275.500 595 L288 592 L308 589.600 L328 588 L348 586.900 L372 586.200 L408 585.700 L465 585.200 L530 584.700 L600 585.100 L660 585.400 L700 586.600 L740 588 L774 590 L796 592 L809 594.600 L798.500 597 L774 599 L740 601.200 L720 602.200 L690 603.300 L660 604.200 L620 604.700 L580 605.200 L530 605.500 L448 605 L408 604.400 L372 603.600 L348 602.800 L328 601.800 L308 600.300 L288 598.300 Z"/>
<path d="M329 87.300 L358.500 77" stroke-width="2.400" stroke-linecap="butt"/>
</g>
</svg>
<div class="t b" style="left:359px;top:70px;font-size:12px;letter-spacing:-0.1px">Check data type</div>
</div></body></html>
